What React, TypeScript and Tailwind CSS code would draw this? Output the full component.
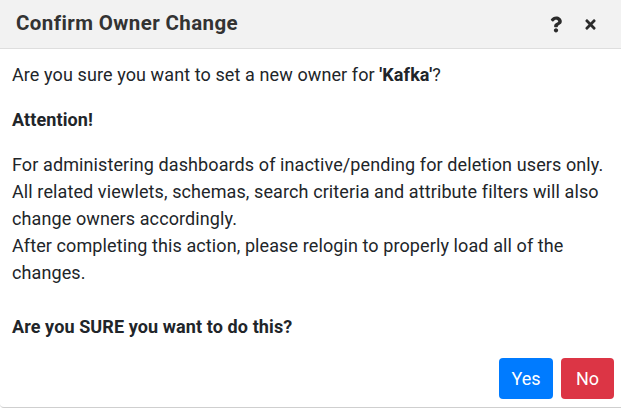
import React from "react";
import { FaQuestion, FaTimes } from "react-icons/fa";

export default function App() {
  return (
    <div
      className="w-[621px] h-[409px] bg-white overflow-hidden text-[#212529]"
      style={{ fontFamily: 'Roboto, "Noto Sans", sans-serif' }}
    >
      <div className="h-[408px] flex flex-col border-b border-[#cfcfcf] rounded-bl-[4px]">
        <div className="h-[49px] shrink-0 bg-[#f2f2f2] border-b border-[#dedede] flex items-center pl-4 pr-[23px]">
          <div className="flex-1 text-[20.5px] font-bold text-[#333] tracking-[0.4px] pb-[1px]">Confirm Owner Change</div>
          <div className="flex items-center gap-[21px] text-[#2b2b2b]">
            <FaQuestion className="w-[12px] h-[17px]" />
            <FaTimes className="w-[15px] h-[15px]" />
          </div>
        </div>
        <div className="flex-1 flex flex-col px-3 pt-3 text-[18px] leading-[27px] tracking-[0.1px]">
          <p className="mb-[18px]">
            Are you sure you want to set a new owner for <b>'Kafka'</b>?
          </p>
          <p className="mb-[18px] font-bold">Attention!</p>
          <p>
            For administering dashboards of inactive/pending for deletion users only.
            <br />
            All related viewlets, schemas, search criteria and attribute filters will also change owners accordingly.
            <br />
            After completing this action, please relogin to properly load all of the changes.
          </p>
          <p className="mt-[27px] font-bold">Are you SURE you want to do this?</p>
          <div className="flex justify-end gap-2 mt-[18px] -mr-[5px]">
            <button className="h-[41px] w-[54px] rounded-[4px] bg-[#007bff] text-white text-[18px] tracking-normal">Yes</button>
            <button className="h-[41px] w-[53px] rounded-[4px] bg-[#dc3545] text-white text-[18px] tracking-normal">No</button>
          </div>
        </div>
      </div>
    </div>
  );
}
